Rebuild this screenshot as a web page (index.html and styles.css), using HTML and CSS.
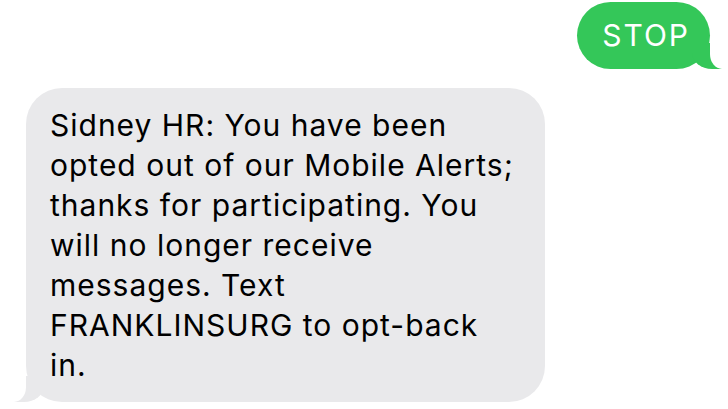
FILE: index.html
```html
<!DOCTYPE html>
<html lang="en">
<head>
<meta charset="utf-8">
<title>Messages</title>
<link rel="stylesheet" href="styles.css">
</head>
<body>
<main class="thread">
  <div class="row row-me">
    <div class="bubble bubble-me">STOP</div>
  </div>
  <div class="row row-them">
    <div class="bubble bubble-them">Sidney HR: You have been<br>opted out of our Mobile Alerts;<br>thanks for participating. You<br>will no longer receive<br>messages. Text<br>FRANKLINSURG to opt-back<br>in.</div>
  </div>
</main>
</body>
</html>
```
FILE: styles.css
```css
html, body {
  margin: 0;
  padding: 0;
  background: #ffffff;
}
body {
  width: 728px;
  height: 409px;
  overflow: hidden;
  font-family: Inter, "Liberation Sans", Arial, sans-serif;
}
.thread {
  display: flex;
  flex-direction: column;
  padding-top: 2px;
  gap: 19px;
}
.row {
  display: flex;
}
.row-me {
  justify-content: flex-end;
  padding-right: 18px;
}
.row-them {
  justify-content: flex-start;
  padding-left: 26px;
}
.bubble {
  position: relative;
  font-size: 30px;
  line-height: 40px;
  letter-spacing: 1px;
}
.bubble-me {
  background: #34c759;
  color: #ffffff;
  height: 67px;
  box-sizing: border-box;
  padding: 13px 20px 0 25px;
  border-radius: 34px;
  letter-spacing: 2px;
}
.bubble-me::before {
  content: "";
  position: absolute;
  bottom: 0;
  right: -12px;
  width: 30px;
  height: 26px;
  background: #34c759;
  border-bottom-left-radius: 20px 16px;
}
.bubble-me::after {
  content: "";
  position: absolute;
  bottom: 0;
  right: -40px;
  width: 40px;
  height: 26px;
  background: #ffffff;
  border-bottom-left-radius: 12px 15px;
}
.bubble-them {
  background: #e9e9eb;
  color: #000000;
  width: 519px;
  height: 314px;
  box-sizing: border-box;
  padding: 17px 4px 17px 24px;
  border-radius: 36px;
  white-space: nowrap;
}
.bubble-them::before {
  content: "";
  position: absolute;
  bottom: 0;
  left: -12px;
  width: 30px;
  height: 26px;
  background: #e9e9eb;
  border-bottom-right-radius: 20px 16px;
}
.bubble-them::after {
  content: "";
  position: absolute;
  bottom: 0;
  left: -40px;
  width: 40px;
  height: 26px;
  background: #ffffff;
  border-bottom-right-radius: 12px 15px;
}
```
